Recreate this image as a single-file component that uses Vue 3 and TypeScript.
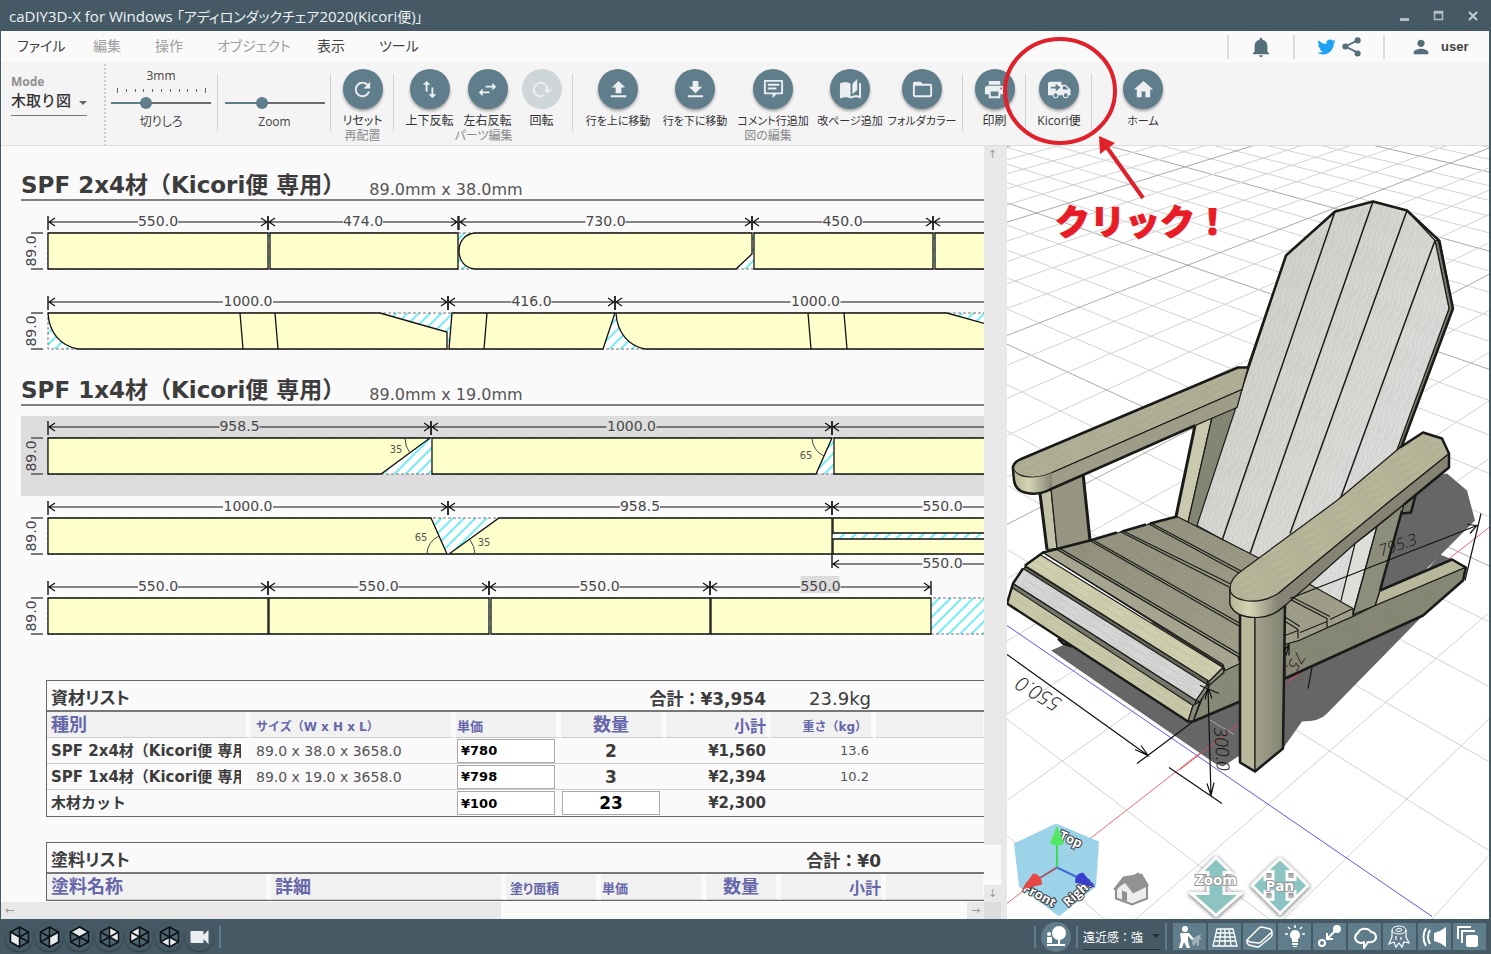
<script setup lang="ts">
import { ref } from 'vue'

interface Tool { label: string; icon: string; disabled?: boolean }
interface Group { cls: string; caption?: string; tools: Tool[] }
interface Dim { a: number; b: number; label: string; mark?: boolean; low?: boolean }
interface Angle { d: string; x: number; y: number; t: string }
interface BoardRow { selected?: boolean; end?: number; dims: Dim[]; faces: string[]; lines: string[]; angles: Angle[] }

const menus = [
  { label: 'ファイル', off: false },
  { label: '編集', off: true },
  { label: '操作', off: true },
  { label: 'オブジェクト', off: true },
  { label: '表示', off: false },
  { label: 'ツール', off: false },
]

const kerf = ref(3)
const zoom = ref(36)

const groups: Group[] = [
  { cls: 'g-reset', caption: '再配置', tools: [
    { label: 'リセット', icon: 'M17.65 6.35C16.2 4.9 14.21 4 12 4c-4.42 0-7.99 3.58-7.99 8s3.57 8 7.99 8c3.73 0 6.84-2.55 7.73-6h-2.08c-.82 2.33-3.04 4-5.65 4-3.31 0-6-2.69-6-6s2.69-6 6-6c1.66 0 3.14.69 4.22 1.78L13 11h7V4l-2.35 2.35z' },
  ] },
  { cls: 'g-parts', caption: 'パーツ編集', tools: [
    { label: '上下反転', icon: 'M16 17.01V10h-2v7.01h-3L15 21l4-3.99h-3zM9 3L5 6.99h3V14h2V6.99h3L9 3z' },
    { label: '左右反転', icon: 'M6.99 11L3 15l3.99 4v-3H14v-2H6.99v-3zM21 9l-3.99-4v3H10v2h7.01v3L21 9z' },
    { label: '回転', icon: 'M11 4a8 8 0 1 0 4.5 14.6l-1.2-1.7A6 6 0 1 1 17 12h-3l4.5 4.5L23 12h-4A8 8 0 0 0 11 4z', disabled: true },
  ] },
  { cls: 'g-draw', caption: '図の編集', tools: [
    { label: '行を上に移動', icon: 'M9 16h6v-6h4l-7-7-7 7h4v6zm-5 2h16v2H4v-2z' },
    { label: '行を下に移動', icon: 'M19 9h-4V3H9v6H5l7 7 7-7zM4 18v2h16v-2H4z' },
    { label: 'コメント行追加', icon: 'M3 2h18a1 1 0 0 1 1 1v13a1 1 0 0 1-1 1h-6l-4 4v-4H3a1 1 0 0 1-1-1V3a1 1 0 0 1 1-1zM4 4v11h16V4zM6 6h12v2H6zM6 10h9v2H6z' },
    { label: '改ページ追加', icon: 'M19 1l-5 5v11l5-4.5V1zM1 6v14.65c0 .25.25.5.5.5.1 0 .15-.05.25-.05C3.1 20.45 5.05 20 6.5 20c1.95 0 4.05.4 5.5 1.5V6c-1.45-1.1-3.55-1.5-5.5-1.5S2.45 4.9 1 6zm22 13.5V6c-.6-.45-1.25-.75-2-1v13.5c-1.1-.35-2.3-.5-3.5-.5-1.7 0-4.15.65-5.5 1.5v2c1.35-.85 3.8-1.5 5.5-1.5 1.65 0 3.35.3 4.75 1.05.1.05.15.05.25.05.25 0 .5-.25.5-.5v-1.1z' },
    { label: 'フォルダカラー', icon: 'M20 6h-8l-2-2H4c-1.1 0-1.99.9-1.99 2L2 18c0 1.1.9 2 2 2h16c1.1 0 2-.9 2-2V8c0-1.1-.9-2-2-2zm0 12H4V8h16v10z' },
  ] },
  { cls: 'g-print', tools: [
    { label: '印刷', icon: 'M19 8H5c-1.66 0-3 1.34-3 3v6h4v4h12v-4h4v-6c0-1.66-1.34-3-3-3zm-3 11H8v-5h8v5zm3-7c-.55 0-1-.45-1-1s.45-1 1-1 1 .45 1 1-.45 1-1 1zm-1-9H6v4h12V3z' },
  ] },
  { cls: 'g-kicori', tools: [
    { label: 'Kicori便', icon: 'M2 4h12v3h4.500l5 5v6h-2a3 3 0 0 1-6 0H11a3 3 0 0 1-6 0H0V6a2 2 0 0 1 2-2zM3 9v2h5v3l5-4-5-4v3zM15.500 8.500v3.500h6l-3.500-3.500zM8 16a2 2 0 1 0 0 4 2 2 0 1 0 0-4zM18.500 16a2 2 0 1 0 0 4 2 2 0 1 0 0-4z' },
  ] },
  { cls: 'g-home', tools: [
    { label: 'ホーム', icon: 'M10 20v-6h4v6h5v-8h3L12 3 2 12h3v8z' },
  ] },
]

const specs: { title: string; size: string; rows: BoardRow[] }[] = [
  {
    title: 'SPF 2x4材（Kicori便 専用）', size: '89.0mm x 38.0mm',
    rows: [
      {
        dims: [
          { a: 27, b: 247, label: '550.0' }, { a: 247, b: 437, label: '474.0' }, { a: 438, b: 731, label: '730.0' },
          { a: 731, b: 912, label: '450.0' }, { a: 912, b: 1192, label: '' },
        ],
        faces: [
          'M27 22H247V58H27Z', 'M249 22H437V58H249Z',
          'M454 22H731V43L715 58H454C444 57 438 50 438 40C438 30 444 23 454 22Z',
          'M733 22H912V58H733Z', 'M914 22H2400V58H914Z',
        ],
        lines: [], angles: [],
      },
      {
        dims: [{ a: 27, b: 427, label: '1000.0' }, { a: 427, b: 594, label: '416.0' }, { a: 594, b: 995, label: '1000.0' }],
        faces: [
          'M27 22H359L426 41V58H57C40 55 28 42 27 22Z', 'M431 22H594L582 58H428Z',
          'M595 22H926L994 41V58H624C608 55 596 42 595 22Z',
        ],
        lines: ['M219 22L222 58', 'M254 22L257 58', 'M466 22L463 58', 'M787 22L790 58', 'M823 22L826 58'], angles: [],
      },
    ],
  },
  {
    title: 'SPF 1x4材（Kicori便 専用）', size: '89.0mm x 19.0mm',
    rows: [
      {
        selected: true,
        dims: [{ a: 27, b: 410, label: '958.5' }, { a: 410, b: 811, label: '1000.0' }, { a: 811, b: 1211, label: '' }],
        faces: ['M27 22H409L360 58H27Z', 'M411 22H811L795 58H411Z', 'M813 22H2400V58H813Z'],
        lines: [],
        angles: [
          { d: 'M384 22A25 25 0 0 0 389 37', x: 375, y: 37, t: '35' },
          { d: 'M791 22A20 20 0 0 0 803 40', x: 785, y: 43, t: '65' },
        ],
      },
      {
        dims: [
          { a: 27, b: 427, label: '1000.0' }, { a: 427, b: 811, label: '958.5' }, { a: 811, b: 1032, label: '550.0' },
          { a: 811, b: 1032, label: '550.0', low: true },
        ],
        faces: ['M27 22H410L426 58H27Z', 'M478 22H811V58H428Z', 'M812 22H1032V37H812Z', 'M812 43H1032V58H812Z'],
        lines: [],
        angles: [
          { d: 'M406 58A20 20 0 0 1 418 40', x: 400, y: 45, t: '65' },
          { d: 'M454 58A25 25 0 0 0 449 44', x: 463, y: 50, t: '35' },
        ],
      },
      {
        dims: [
          { a: 27, b: 247, label: '550.0' }, { a: 247, b: 468, label: '550.0' }, { a: 468, b: 689, label: '550.0' },
          { a: 689, b: 910, label: '550.0', mark: true },
        ],
        faces: ['M27 22H247V58H27Z', 'M248 22H468V58H248Z', 'M470 22H689V58H470Z', 'M690 22H910V58H690Z'],
        lines: [], angles: [],
      },
    ],
  },
]

function half(d: Dim): number {
  return d.label.length === 6 ? 25 : d.label ? 20 : 0
}
function dimPath(d: Dim): string {
  const y = d.low ? 68 : 11
  const m = (d.a + d.b) / 2
  const h = half(d)
  return `M${d.a} ${y}H${m - h}M${m + h} ${y}H${d.b}M${d.a + 7} ${y - 4}L${d.a + 1} ${y}L${d.a + 7} ${y + 4}M${d.b - 7} ${y - 4}L${d.b - 1} ${y}L${d.b - 7} ${y + 4}`
}
function tickPath(d: Dim): string {
  return d.low ? `M${d.a} 58V72` : `M${d.a} 5V19M${d.b} 5V19`
}

const materials = [
  { name: 'SPF 2x4材（Kicori便 専用）', size: '89.0 x 38.0 x 3658.0', price: '¥780', qty: '2', sub: '¥1,560', kg: '13.6' },
  { name: 'SPF 1x4材（Kicori便 専用）', size: '89.0 x 19.0 x 3658.0', price: '¥798', qty: '3', sub: '¥2,394', kg: '10.2' },
  { name: '木材カット', size: '', price: '¥100', qty: '23', sub: '¥2,300', kg: '', edit: true },
]

// Ground grid: each family of lines meets in its own vanishing point.
interface GridLine { y1: number; y2: number; major: boolean }
const X1 = 1007
const X2 = 1489
const grid: GridLine[] = []
for (let n = -2; n <= 22; n++) {
  const s = 1.455 + 0.144 * n
  if (n !== 0) grid.push({ y1: (X1 + 230) / s - 225, y2: (X2 + 230) / s - 225, major: n % 5 === 0 })
}
for (let n = -3; n <= 24; n++) {
  const s = 1.282 + 0.129 * n
  if (n !== 0) grid.push({ y1: (2460 - X1) / s - 230, y2: (2460 - X2) / s - 230, major: n % 5 === 0 })
}

const cubeViews = [
  { name: '正面', face: '3,7 12,12 12,22 3,17', front: true },
  { name: '右', face: '21,7 12,12 12,22 21,17', front: true },
  { name: '上', face: '12,2 21,7 12,12 3,7', front: true },
  { name: '背面', face: '12,2 21,7 21,17 12,12', front: false },
  { name: '左', face: '12,2 3,7 3,17 12,12', front: false },
  { name: '下', face: '3,17 12,12 21,17 12,22', front: false },
]
</script>

<template>
  <div class="app">
    <header class="titlebar">
      <h1>caDIY3D-X for Windows <span>「アディロンダックチェア</span>2020(Kicori<span>便</span>)<span>」</span></h1>
      <div class="winbtns">
        <button aria-label="最小化"><svg viewBox="0 0 12 12"><path d="M1 8h9v3H1z" fill="#b4c0c6" /></svg></button>
        <button aria-label="最大化"><svg viewBox="0 0 12 12"><path d="M1.500 1.500h8v8h-8zM1.500 3h8" fill="none" stroke="#b4c0c6" stroke-width="1.500" /></svg></button>
        <button aria-label="閉じる"><svg viewBox="0 0 12 12"><path d="M2 2l8 8M10 2l-8 8" stroke="#c3cdd2" stroke-width="2" /></svg></button>
      </div>
    </header>

    <div class="menubar">
      <nav>
        <button v-for="m in menus" :key="m.label" :disabled="m.off">{{ m.label }}</button>
      </nav>
      <div class="account">
        <button class="cell bell" aria-label="お知らせ"><svg viewBox="0 0 24 24"><path d="M12 23c1.100 0 2-.9 2-2h-4c0 1.100.89 2 2 2zm7-6v-6c0-3.500-2-6-5.500-6.800V3.500C13.500 2.700 12.800 2 12 2s-1.500.7-1.500 1.500v.7C7 5 5 7.500 5 11v6l-2 2v1h18v-1z" /></svg></button>
        <div class="cell social">
          <button aria-label="Twitter"><svg viewBox="0 0 24 24" class="tw"><path d="M22.460 6c-.77.35-1.600.58-2.460.69.88-.53 1.560-1.370 1.880-2.380-.83.5-1.750.85-2.720 1.050C18.370 4.500 17.260 4 16 4c-2.350 0-4.270 1.920-4.270 4.290 0 .34.04.67.11.98C8.280 9.090 5.110 7.380 3 4.790c-.37.63-.58 1.370-.58 2.150 0 1.490.75 2.810 1.910 3.560-.71 0-1.370-.2-1.950-.5v.03c0 2.080 1.480 3.820 3.440 4.210a4.220 4.220 0 0 1-1.930.07 4.280 4.280 0 0 0 4 2.980 8.521 8.521 0 0 1-5.330 1.840c-.34 0-.68-.02-1.020-.06C3.440 20.290 5.700 21 8.120 21 16 21 20.330 14.460 20.330 8.790c0-.19 0-.37-.01-.56.84-.6 1.560-1.360 2.140-2.230z" /></svg></button>
          <button aria-label="共有"><svg viewBox="0 0 24 24"><path d="M19 5L5 12l14 7" fill="none" stroke="#546e7a" stroke-width="2" /><circle cx="19" cy="5" r="3.500" /><circle cx="5" cy="12" r="3.500" /><circle cx="19" cy="20" r="3.500" /></svg></button>
        </div>
        <button class="cell person"><svg viewBox="0 0 24 24"><path d="M12 12c2.210 0 4-1.790 4-4s-1.790-4-4-4-4 1.790-4 4 1.790 4 4 4zm0 2c-2.670 0-8 1.340-8 4v2h16v-2c0-2.660-5.330-4-8-4z" /></svg><span>user</span></button>
      </div>
    </div>

    <div class="toolbar">
      <div class="mode">
        <label for="mode">Mode</label>
        <div class="pick">
          <select id="mode"><option>木取り図</option></select>
          <svg viewBox="0 0 8 4"><path d="M0 0h8L4 4z" fill="#666" /></svg>
        </div>
      </div>
      <div class="slide kerf">
        <output for="kerf">{{ kerf }}mm</output>
        <svg class="ticks" viewBox="0 0 100 5"><path d="M6.500 0v5M15.500 1v3M24.500 1v3M32.500 1v3M41.500 1v3M50.500 1v3M59.500 1v3M68.500 1v3M76.500 1v3M85.500 1v3M94.500 0v5" stroke="#666" /></svg>
        <input id="kerf" v-model.number="kerf" type="range" min="0" max="9">
        <label for="kerf">切りしろ</label>
      </div>
      <div class="slide zoom">
        <input id="zoom" v-model.number="zoom" type="range" min="0" max="100">
        <label for="zoom">Zoom</label>
      </div>
      <section v-for="g in groups" :key="g.cls" class="group" :class="g.cls">
        <div class="tools">
          <button v-for="t in g.tools" :key="t.label" class="tool" :disabled="t.disabled">
            <span class="disc"><svg viewBox="0 0 24 24"><path :d="t.icon" fill-rule="evenodd" /></svg></span>
            <span class="name">{{ t.label }}</span>
          </button>
        </div>
        <p v-if="g.caption">{{ g.caption }}</p>
      </section>
    </div>

    <main>
      <div class="left">
        <div class="doc">
          <svg class="defs" width="0" height="0" aria-hidden="true">
            <defs>
              <pattern id="hatch" width="8" height="8" patternUnits="userSpaceOnUse" patternTransform="rotate(45)">
                <rect width="8" height="8" fill="#fff" /><path d="M1 0V8" stroke="#74ecf4" stroke-width="2" />
              </pattern>
            </defs>
          </svg>
          <section v-for="s in specs" :key="s.title">
            <div class="head"><h2>{{ s.title }}</h2><span>{{ s.size }}</span></div>
            <svg v-for="(r, i) in s.rows" :key="i" class="board" :class="{ selected: r.selected }">
              <rect x="27" y="22" width="2400" height="36" fill="url(#hatch)" stroke="#777" stroke-dasharray="3 2" />
              <path v-for="f in r.faces" :key="f" :d="f" fill="#ffffcc" stroke="#111" stroke-width="1.300" />
              <path v-for="l in r.lines" :key="l" :d="l" stroke="#111" stroke-width="1.300" />
              <path d="M10 22H22M10 58H22" stroke="#777" stroke-width="2" />
              <text class="num" transform="translate(15 40) rotate(-90)" text-anchor="middle">89.0</text>
              <g v-for="(d, k) in r.dims" :key="k">
                <path :d="dimPath(d)" fill="none" stroke="#111" stroke-width="1.200" />
                <path :d="tickPath(d)" stroke="#222" stroke-width="1.500" />
                <rect v-if="d.mark" :x="(d.a + d.b) / 2 - 20" y="0" width="39" height="17" fill="#ddd" />
                <text class="num" :x="(d.a + d.b) / 2" :y="d.low ? 72 : 15" text-anchor="middle">{{ d.label }}</text>
              </g>
              <g v-for="a in r.angles" :key="a.d">
                <path :d="a.d" fill="none" stroke="#444" />
                <text class="ang" :x="a.x" :y="a.y" text-anchor="middle">{{ a.t }}</text>
              </g>
            </svg>
          </section>

          <table class="list one">
            <colgroup><col class="w204"><col class="w205"><col class="w105"><col class="w105"><col class="w105"><col class="w105"><col></colgroup>
            <thead>
              <tr class="top"><th colspan="2" class="ttl">資材リスト</th><th colspan="3" class="sum">合計：¥3,954</th><th class="kgs">23.9kg</th><th /></tr>
              <tr class="cols"><th class="big">種別</th><th class="full">サイズ（W x H x L）</th><th class="tight">単価</th><th class="big mid">数量</th><th class="med rt">小計</th><th class="full rt wt">重さ（kg）</th><th /></tr>
            </thead>
            <tbody>
              <tr v-for="m in materials" :key="m.name">
                <td class="nm"><div>{{ m.name }}</div></td>
                <td class="sz">{{ m.size }}</td>
                <td class="box"><input :value="m.price" :aria-label="m.name + ' 単価'"></td>
                <td v-if="m.edit" class="box"><input class="qty" :value="m.qty" :aria-label="m.name + ' 数量'"></td>
                <td v-else class="qt">{{ m.qty }}</td>
                <td class="sb">{{ m.sub }}</td>
                <td class="kg">{{ m.kg }}</td>
                <td />
              </tr>
            </tbody>
          </table>

          <table class="list two">
            <colgroup><col class="w224"><col class="w235"><col class="w95"><col class="w105"><col class="w75"><col class="w105"><col></colgroup>
            <thead>
              <tr class="top"><th colspan="3" class="ttl">塗料リスト</th><th colspan="3" class="sum">合計：¥0</th><th /></tr>
              <tr class="cols"><th class="big">塗料名称</th><th class="big">詳細</th><th>塗り面積</th><th class="tight">単価</th><th class="big mid">数量</th><th class="med rt">小計</th><th /></tr>
            </thead>
          </table>
        </div>
        <div class="vbar"><button aria-label="上へ">↑</button><span class="track" /><span class="thumb" /><button aria-label="下へ">↓</button></div>
        <div class="hbar"><button aria-label="左へ">←</button><span class="track" /><span class="thumb" /><button aria-label="右へ">→</button></div>
        <span class="corner" />
        <span class="split" />
      </div>

      <svg class="scene" viewBox="1007 145 482 774" preserveAspectRatio="xMidYMid slice" role="img" aria-label="アディロンダックチェア">
        <defs>
          <pattern id="grainA" width="9" height="40" patternUnits="userSpaceOnUse" patternTransform="rotate(20)">
            <path d="M1.500 0V25M4 8V40M6.500 0V15M8 18V38" stroke="#77776c" stroke-width=".6" opacity=".22" />
          </pattern>
          <pattern id="grainB" width="40" height="7" patternUnits="userSpaceOnUse" patternTransform="rotate(29)">
            <path d="M0 1.500H25M8 3.500H40M0 5.500H18" stroke="#55554a" stroke-width=".6" opacity=".18" />
          </pattern>
          <pattern id="grainC" width="40" height="7" patternUnits="userSpaceOnUse" patternTransform="rotate(-32)">
            <path d="M0 1.500H25M8 3.500H40M0 5.500H18" stroke="#66664e" stroke-width=".6" opacity=".18" />
          </pattern>
          <linearGradient id="back" x1="0" y1="0" x2="1" y2="1"><stop offset="0" stop-color="#cdcdc4" /><stop offset="1" stop-color="#e2e2e4" /></linearGradient>
          <linearGradient id="cap" x1="0" y1="0" x2="1" y2="0"><stop offset="0" stop-color="#b5b596" /><stop offset=".4" stop-color="#d6d6b5" /><stop offset="1" stop-color="#858474" /></linearGradient>
          <linearGradient id="leg" x1="0" y1="0" x2="1" y2="0"><stop offset="0" stop-color="#a2a28c" /><stop offset="1" stop-color="#828272" /></linearGradient>
          <linearGradient id="seat" x1="0" y1="0" x2="1" y2=".6"><stop offset="0" stop-color="#8f8f7d" /><stop offset="1" stop-color="#a0a08a" /></linearGradient>
        </defs>
        <rect x="1007" y="145" width="482" height="774" fill="#fff" />
        <g fill="none">
          <line v-for="(l, i) in grid" :key="i" :x1="X1" :y1="l.y1" :x2="X2" :y2="l.y2" :stroke="l.major ? '#a9a9a9' : '#d2d2d2'" />
        </g>
        <path d="M1007 903L1489 527" stroke="#f26a70" />
        <path d="M1007 625L1432 916" stroke="#5a5af0" />

        <g fill="#666">
          <path d="M1415 478L1447 473L1467 490L1475 520L1423 572L1385 600L1300 600L1350 520Z" />
          <path d="M1420 578L1440 554L1455 560L1440 572Z" />
          <path d="M1051 650L1067 643L1240 600L1380 600L1430 608L1423 615L1327 713Q1320 721 1302 721L1283 748L1238 756L1223 766L1215 763Z" />
        </g>
        <path d="M1285 684L1302 671M1180 769L1238 724" stroke="#d94c52" />
        <path d="M1209 719L1234 734" stroke="#aaa" />

        <g stroke="#1a1a18" stroke-width="1.200" stroke-linejoin="round">
          <!-- left rear upright -->
          <path d="M1195 425L1212 417L1188 522L1176 516Z" fill="#c9c9af" />
          <path d="M1212 417L1240 403L1197 527L1188 522Z" fill="#858574" />
          <!-- left front leg -->
          <path d="M1040 493L1051 488L1057 548L1047 549Z" fill="#c2c2a8" />
          <path d="M1051 488L1083 473L1090 540L1057 548Z" fill="#959581" />
          <path d="M1083 473L1090 540M1040 493L1047 549M1195 425L1176 516" fill="none" stroke-width="3" />
          <!-- backrest -->
          <path d="M1435 240L1440 240L1453 308L1402 445L1394 454L1449 308Z" fill="#7b7b70" />
          <path d="M1286 255L1335 211L1373 201L1407 210L1435 240L1449 308L1340 604L1197 525Z" fill="url(#back)" />
          <path d="M1286 255L1335 211L1373 201L1407 210L1435 240L1449 308L1340 604L1197 525Z" fill="url(#grainA)" stroke="none" />
          <path d="M1335 211L1222 540M1373 201L1250 553M1407 210L1290 533M1435 240L1325 540" fill="none" stroke-width="1.500" />
          <path d="M1355 543L1377 526L1353 613L1340 604Z" fill="#deded8" />
          <path d="M1248 367L1286 255L1335 211L1373 201L1407 210L1439 240L1453 308L1402 445" fill="none" stroke-width="2.500" />
          <!-- left armrest -->
          <path d="M1013 467Q1013 461 1020 459L1238 367L1248 367L1242 389L1050 473Q1033 480 1019 474Q1013 471 1013 467Z" fill="#b1b096" />
          <path d="M1013 467Q1013 461 1020 459L1238 367L1248 367L1242 389L1050 473Q1033 480 1019 474Z" fill="url(#grainC)" stroke="none" />
          <path d="M1013 467Q1016 478 1033 477Q1045 476 1050 473L1242 389L1237 407L1195 425L1050 489Q1037 495 1023 491Q1014 488 1014 480Z" fill="#9d9d88" />
          <path d="M1013 467Q1016 478 1033 477Q1045 476 1052 472V489Q1037 495 1023 491Q1014 488 1014 480Z" fill="url(#cap)" stroke="none" />
          <path d="M1248 367H1238L1020 459Q1012 463 1013 469L1014 480Q1016 492 1030 493Q1041 494 1050 489L1195 425" fill="none" stroke-width="2.500" />
          <!-- seat -->
          <path d="M1043 552L1090 540L1177 516L1250 553L1310 584L1353 608V616L1328 627L1300 640L1285 644L1225 667Z" fill="url(#seat)" />
          <path d="M1043 552L1090 540L1177 516L1250 553L1310 584L1353 608V616L1328 627L1300 640L1285 644L1225 667Z" fill="url(#grainB)" stroke="none" />
          <path d="M1057 549L1238 656M1060 548L1240 654M1090 540L1240 626M1092 539L1242 624M1120 531L1240 592L1298 629V638M1122 530L1242 589L1300 626M1148 523L1240 573L1327 618V627M1150 522L1242 571L1330 616M1285 635L1298 630M1300 632L1327 621M1330 619L1353 608" fill="none" />
          <!-- side rail -->
          <path d="M1240 655L1223 671L1207 686L1193 721L1240 701Z" fill="#898977" />
          <path d="M1285 644L1299 640L1328 627L1353 616L1375 605L1465 567L1463 580L1423 615L1285 678Z" fill="#878776" />
          <path d="M1285 644L1299 640L1353 616L1465 567L1463 580L1423 615L1285 678Z" fill="url(#grainC)" stroke="none" />
          <path d="M1380 590L1452 559L1465 567L1375 605Z" fill="#b7b79b" />
          <path d="M1380 590L1452 559L1466 567L1463 580L1423 615L1285 678M1193 721L1240 701" fill="none" stroke-width="2.500" />
          <!-- right rear leg -->
          <path d="M1402 496L1416 492L1411 512L1402 513Z" fill="#77776a" />
          <path d="M1377 526L1404 504L1380 590L1375 605L1353 614Z" fill="#8d8d7c" />
          <path d="M1402 510L1380 590M1402 513L1411 512L1416 493" fill="none" stroke-width="2.500" />
          <!-- front slats -->
          <path d="M1043 552L1057 549L1238 656L1240 663L1225 670L1223 664Z" fill="#a5a58f" />
          <path d="M1040 554L1025 565L1209 681L1223 667Z" fill="#d0d0b0" />
          <path d="M1209 681L1223 667L1224 672L1209 685Z" fill="#8b8b7a" />
          <path d="M1025 566L1208 680L1206 686L1023 571Z" fill="#66665c" />
          <path d="M1023 568L1013 583L1196 700L1207 684Z" fill="#d6d6d6" />
          <path d="M1013 583L1196 700L1194 706L1012 589Z" fill="#77776b" />
          <path d="M1012 587L1007 603L1188 721L1193 705Z" fill="#c9c9aa" />
          <path d="M1193 705L1200 701L1193 721L1188 721Z" fill="#8b8b7a" />
          <path d="M1196 700L1207 684L1209 687L1200 701Z" fill="#8b8b7a" />
          <path d="M1007 603L1188 721L1240 701L1225 667L1040 554Z" fill="url(#grainB)" stroke="none" />
          <path d="M1177 516L1150 523M1146 524L1122 531M1117 532L1090 540L1043 552L1025 565M1023 568L1013 583L1007 603L1188 721L1193 721M1058 638L1063 643L1072 646" fill="none" stroke-width="2.500" />
          <!-- right front leg -->
          <path d="M1240 612L1255 615V771L1240 762Z" fill="#bab99c" />
          <path d="M1255 615L1285 600L1283 748L1255 771Z" fill="url(#leg)" />
          <path d="M1240 612V762L1255 771L1283 748L1285 603" fill="none" stroke-width="2.500" />
          <!-- right armrest -->
          <path d="M1230 588V604Q1235 617 1257 617Q1272 617 1285 605L1308 585L1355 543L1405 503L1449 467V453L1388 502L1278 593Q1262 603 1245 600Z" fill="#858474" />
          <path d="M1230 588V604Q1235 617 1257 617Q1270 617 1278 611V593Q1262 603 1245 600Z" fill="url(#cap)" stroke="none" />
          <path d="M1230 588Q1230 578 1242 570L1337 500L1400 447L1423 432L1442 438L1449 453L1388 502L1278 593Q1262 603 1245 600Q1230 597 1230 588Z" fill="#b8b699" />
          <path d="M1230 588Q1230 578 1242 570L1337 500L1400 447L1423 432L1442 438L1449 453L1388 502L1278 593Q1262 603 1245 600Q1230 597 1230 588Z" fill="url(#grainC)" stroke="none" />
          <path d="M1230 588V604Q1235 617 1257 617Q1272 617 1285 605" fill="none" />
          <path d="M1400 447L1423 432L1442 438L1449 453V467L1404 504" fill="none" stroke-width="2.500" />
        </g>

        <!-- dimensions in space -->
        <g stroke="#111" stroke-width="1.200" fill="none">
          <path d="M1290 598L1477 525M1467 524L1477 525L1470 533M1481 513L1465 580" />
          <path d="M1007 654L1148 755M1137 763L1192 722M1141 745L1148 755L1135 749" />
          <path d="M1208 687L1211 795M1205 699L1208 687L1212 698M1207 783L1211 795L1214 782M1169 767L1222 803M1200 685L1219 693" />
          <path d="M1312 667L1308 688M1289 644L1286 655M1284 650L1289 644V655" />
        </g>
        <g class="dim3">
          <text class="small" transform="translate(1381 556) rotate(-19)">795.3</text>
          <text transform="translate(1063 700) rotate(211)">550.0</text>
          <text class="mid" transform="translate(1214 727) rotate(86)">300.0</text>
          <text class="small" transform="translate(1297 650) rotate(125)">75.</text>
        </g>

        <!-- view cube -->
        <path d="M1056 823L1099 841L1096 886L1059 916L1019 886L1014 843Z" fill="#8fcde6" opacity=".88" />
        <g class="cubetxt">
          <text transform="translate(1058 838) rotate(24)">Top</text>
          <text transform="translate(1022 890) rotate(29)">Front</text>
          <text transform="translate(1068 907) rotate(-42)">Right</text>
        </g>
        <path d="M1057 867V842" stroke="#3ddc55" stroke-width="2" />
        <path d="M1057 867L1036 880" stroke="#a05a6a" stroke-width="2" />
        <path d="M1057 867L1080 878" stroke="#3f6fd8" stroke-width="2" />
        <path d="M1057 825L1050 843Q1057 847 1064 843Z" fill="#4fe860" />
        <path d="M1022 889L1033 873Q1042 874 1042 884Z" fill="#e84545" />
        <path d="M1095 887L1075 882Q1075 873 1083 872Z" fill="#3c3ccf" />

        <!-- home -->
        <path d="M1118 886L1138 873L1147 886V898L1132 904L1116 898V889Z" fill="#ededed" stroke="#8f8f8f" stroke-width="2" />
        <path d="M1113 889L1123 876L1142 873L1149 885L1133 893L1124 881L1116 890Z" fill="#929292" />
        <path d="M1122 890L1127 892V901L1122 899Z" fill="#8f8f8f" />

        <!-- zoom and pan handles -->
        <g class="handle">
          <path d="M1216 857L1231 872H1224V893H1241L1216 915L1191 893H1208V872H1201Z" />
          <path d="M1280 858L1294 871H1287V879H1295V872L1308 885L1295 898V891H1287V899H1294L1280 913L1266 899H1273V891H1265V898L1252 885L1265 872V879H1273V871H1266Z" />
        </g>
        <g class="handletxt">
          <text x="1216" y="884" text-anchor="middle">Zoom</text>
          <text x="1280" y="890" text-anchor="middle">Pan</text>
        </g>
      </svg>
    </main>

    <footer>
      <div class="views">
        <button v-for="c in cubeViews" :key="c.name" :aria-label="c.name">
          <svg viewBox="0 0 24 24">
            <polygon points="12,2 21,7 21,17 12,22 3,17 3,7" fill="#4d6570" />
            <polygon v-if="!c.front" :points="c.face" fill="#e8ecef" />
            <path d="M12 2L21 7V17L12 22L3 17V7ZM12 2V22M3 7L21 17M21 7L3 17" fill="none" stroke="#0d1417" stroke-width="1.500" />
            <polygon v-if="c.front" :points="c.face" fill="#e8ecef" stroke="#0d1417" stroke-width="1.500" />
          </svg>
        </button>
        <button aria-label="カメラ"><svg viewBox="0 0 24 24"><path d="M4 6h11a1 1 0 0 1 1 1v3l5-5v14l-5-5v3a1 1 0 0 1-1 1H4a1 1 0 0 1-1-1V7a1 1 0 0 1 1-1z" fill="#eceff1" /></svg></button>
      </div>
      <div class="status">
        <button class="scenery" aria-label="背景"><svg viewBox="0 0 30 30"><circle cx="15" cy="15" r="15" fill="#607d8b" /><circle cx="18" cy="11" r="7" fill="#fff" /><path d="M17 16h2v6h5v2H6v-2h11z" fill="#fff" /><circle cx="8" cy="12" r="2" fill="#fff" /><path d="M6 15h5v6H6z" fill="#fff" /></svg></button>
        <div class="persp">
          <select aria-label="遠近感"><option>遠近感：強</option></select>
          <svg viewBox="0 0 8 4"><path d="M0 0h8L4 4z" fill="#263238" /></svg>
        </div>
        <div class="toggles">
          <button aria-label="人物"><svg viewBox="0 0 32 26"><circle cx="11" cy="5" r="3" fill="#fff" /><path d="M7 9h8l5 6-2 1-4-4v5l2 7h-3l-3-6-2 6H5l2-8-1-6z" fill="#fff" /><path d="M18 20q0-6 5-8l4-2-1 3 2 2-3 1v6h-2v-4l-3 4z" fill="#9fb1ba" /></svg></button>
          <button aria-label="グリッド"><svg viewBox="0 0 32 26"><path d="M8 5h16l4 17H4zM7 9h18M6 13h20M5 17h22M12 5l-2 17M16 5v17M20 5l2 17" fill="none" stroke="#fff" stroke-width="1.300" /></svg></button>
          <button aria-label="板"><svg viewBox="0 0 32 26"><path d="M3 16L15 4q1-1 3-1l8 2q2 1 2 3v3q0 1-1 2L16 22q-1 1-3 1l-8-2q-2-1-2-3zM3 16q1 1 3 2l8 1q2 0 3-1L28 8" fill="none" stroke="#fff" stroke-width="1.500" stroke-linejoin="round" /></svg></button>
          <button aria-label="照明"><svg viewBox="0 0 32 26"><path d="M16 6a5 5 0 0 1 3 9v3h-6v-3a5 5 0 0 1 3-9zM13 19h6v2h-6zM14 22h4v1h-4z" fill="#fff" /><path d="M16 1v3M9 3l2 2M23 3l-2 2M6 10h3M23 10h3" stroke="#fff" stroke-width="1.500" /></svg></button>
          <button aria-label="寸法"><svg viewBox="0 0 32 26"><circle cx="8" cy="19" r="3" fill="none" stroke="#fff" stroke-width="2" /><circle cx="23" cy="5" r="4" fill="#fff" /><path d="M22 6l-8 8M13 9v6h6" fill="none" stroke="#fff" stroke-width="2" /></svg></button>
          <button aria-label="コメント"><svg viewBox="0 0 32 26"><path d="M9 18a5 5 0 0 1 0-9 7 6 0 0 1 13-1 5 5 0 0 1 3 9q-3 2-6 1l-4 6v-6q-3 2-6 0z" fill="none" stroke="#fff" stroke-width="2" stroke-linejoin="round" /></svg></button>
          <button aria-label="木目"><svg viewBox="0 0 32 26"><ellipse cx="15" cy="6" rx="7" ry="4" fill="none" stroke="#fff" /><ellipse cx="15" cy="6" rx="3" ry="1.500" fill="none" stroke="#fff" /><path d="M8 6v7l-3 7 5-2 2 5 3-4 3 4 2-5 5 1-3-6V6M12 12v4M17 13v3" fill="none" stroke="#fff" stroke-width="1.200" /></svg></button>
          <button aria-label="音"><svg viewBox="0 0 32 26"><path d="M15 9l6-2 6-4v20l-6-4-6-2z" fill="#fff" /><path d="M11 6q-4 7 0 14M7 4q-5 9 0 18" fill="none" stroke="#fff" stroke-width="2" /></svg></button>
          <button aria-label="重なり"><svg viewBox="0 0 32 26"><rect x="12" y="11" width="12" height="12" rx="2" fill="#fff" /><path d="M8 19V7h13M4 15V3h13" fill="none" stroke="#fff" stroke-width="2" /></svg></button>
        </div>
      </div>
    </footer>

    <svg class="callout" width="260" height="240">
      <ellipse cx="60" cy="61" rx="55" ry="52" fill="none" stroke="#e0202a" stroke-width="4" />
      <path d="M143 168L106 116" stroke="#e0202a" stroke-width="4" />
      <path d="M99 106L115 113L100 124Z" fill="#e0202a" />
      <text x="55" y="205">クリック！</text>
    </svg>
  </div>
</template>

<style>
html, body { margin: 0; overflow: hidden; }
</style>

<style scoped>
.app {
  position: relative; box-sizing: border-box; height: 100vh; display: flex; flex-direction: column;
  border: solid #455a64; border-width: 0 2px 0 1px; background: #fafafa; color: #424242;
  font-family: "Open Sans", "Noto Sans CJK JP", sans-serif;
}
button { font: inherit; color: inherit; border: 0; padding: 0; margin: 0; background: none; }
svg { display: block; }
h1, h2, p { margin: 0; }

.titlebar { flex: none; height: 31px; background: #455a64; display: flex; justify-content: space-between; align-items: center; padding: 0 8px; }
h1 { font-size: 15px; font-weight: 400; color: #eef2f4; font-feature-settings: "palt"; white-space: nowrap; }
h1 span { font-size: 14px; }
.winbtns { display: flex; gap: 22px; padding-right: 2px; }
.winbtns svg { width: 12px; height: 12px; }

.menubar { flex: none; height: 31px; display: flex; justify-content: space-between; }
nav { display: grid; grid-template-columns: 76px 62px 62px 100px 62px 62px; padding: 0 0 4px 16px; align-items: center; }
nav button { font-size: 14px; text-align: left; font-feature-settings: "palt"; white-space: nowrap; }
nav button:disabled { color: #9e9e9e; }
.account { display: flex; align-items: center; }
.cell { box-sizing: border-box; height: 24px; border-left: 2px solid #ddd; display: flex; align-items: center; justify-content: center; }
.cell svg { width: 22px; height: 22px; fill: #546e7a; }
.bell { width: 66px; }
.social { width: 90px; gap: 4px; }
.social svg { width: 21px; height: 21px; }
.social .tw { fill: #1da1f2; }
.person { width: 106px; gap: 9px; justify-content: flex-start; padding-left: 25px; font: bold 13px "Liberation Sans", sans-serif; }

.toolbar { flex: none; height: 83px; background: #f4f4f4; border-bottom: 1px solid #ddd; display: flex; }
.mode { width: 92px; padding: 12px 0 0 10px; }
.mode, .slide, .group { box-sizing: border-box; }
.mode label { display: block; font-size: 12px; line-height: 16px; font-weight: 700; color: #8f8f8f; }
.pick { width: 76px; display: flex; align-items: center; border-bottom: 1px solid #777; height: 25px; }
.pick select { appearance: none; flex: 1; min-width: 0; border: 0; padding: 0; background: none; font: 500 15px "Noto Sans CJK JP", sans-serif; color: #333; height: 24px; margin-bottom: 6px; }
.pick svg { width: 8px; height: 4px; }
.slide { position: relative; width: 107px; display: flex; flex-direction: column; align-items: center; font-size: 12px; line-height: 14px; color: #444; }
.kerf { margin-left: 11px; padding-top: 7px; width: 114px; background: radial-gradient(circle at 1px 2px, #ccc 1px, transparent 1px) 0 5px / 3px 4px repeat-y; }
.zoom { width: 113px; padding-top: 35px; }
.ticks { width: 100px; height: 5px; margin: 5px 0 4px; }
.slide input { appearance: none; width: 100px; height: 12px; margin: 0; background: linear-gradient(#607d8b, #607d8b) 0 5px / 34px 2px no-repeat, linear-gradient(#6f6a6c, #6f6a6c) 0 5px / 100% 2px no-repeat; }
.slide input::-webkit-slider-thumb { appearance: none; width: 12px; height: 12px; border-radius: 50%; background: #607d8b; }
.slide label { margin-top: 6px; font-feature-settings: "palt"; }
.kerf::after, .zoom::after, .group::after { content: ""; position: absolute; right: 0; top: 12px; height: 57px; border-right: 1px solid #d0d0d0; }

.group { position: relative; padding-top: 7px; }
.g-home::after { display: none; }
.tools { display: grid; justify-content: center; }
.g-reset { width: 63px; }
.g-parts { width: 179px; } .g-parts .tools { grid-template-columns: 58px 58px 50px; }
.g-draw { width: 390px; } .g-draw .tools { grid-template-columns: 76px 78px 78px 76px 68px; }
.g-print { width: 63px; }
.g-kicori { width: 66px; }
.g-home { width: 102px; }
.tool { display: flex; flex-direction: column; align-items: center; }
.disc { width: 40px; height: 40px; border-radius: 50%; background: #607d8b; display: flex; align-items: center; justify-content: center; box-shadow: 0 2px 3px rgba(0, 0, 0, .35); }
.disc svg { width: 23px; height: 23px; fill: #eceff1; }
.tool:disabled .disc { background: #cfd6da; box-shadow: none; }
.name { margin-top: 4px; font-size: 12px; line-height: 16px; color: #333; white-space: nowrap; font-feature-settings: "palt"; }
.g-draw .name, .g-home .name { font-size: 11px; }
.group p { text-align: center; font-size: 12px; line-height: 14px; color: #8a8a8a; font-feature-settings: "palt"; }

main { flex: 1; min-height: 0; display: flex; }
.left { flex: 1006 1 0; min-width: 0; display: grid; grid-template-columns: minmax(0, 1fr) 17px 6px; grid-template-rows: minmax(0, 1fr) 17px; }
.doc { overflow: hidden; padding: 20px 0 0 20px; font-family: "DejaVu Sans", "Noto Sans CJK JP", sans-serif; }
.defs { position: absolute; }
.head { box-sizing: border-box; height: 35px; border-bottom: 2px solid #808080; margin-bottom: 10px; display: flex; align-items: flex-start; gap: 24px; white-space: nowrap; }
h2 { font-size: 23px; line-height: 39px; color: #3c3c3c; }
.head span { font-size: 16px; line-height: 48px; color: #555; }
.board { width: 100%; height: 80px; overflow: hidden; }
.board.selected { background: #ddd; }
.num { font-size: 14px; fill: #484848; }
.ang { font-size: 10px; fill: #555; }

.list { margin: 24px 0 0 25px; width: calc(100% - 20px); table-layout: fixed; border-collapse: separate; border-spacing: 0; border: 1px solid #666; color: #3c3c3c; }
.two { margin-top: 25px; }
.w204 { width: 204px; } .w205 { width: 205px; } .w105 { width: 105px; } .w224 { width: 224px; } .w235 { width: 235px; } .w95 { width: 95px; } .w75 { width: 75px; }
.list th, .list td { box-sizing: border-box; padding: 0 5px 0 4px; white-space: nowrap; line-height: 22px; text-align: left; }
.list .top th { height: 31px; border-bottom: 2px solid #777; padding-top: 4px; }
.list .ttl { font-size: 17px; font-feature-settings: "palt"; }
.list .sum { font-size: 17px; text-align: right; vertical-align: bottom; }
.list .kgs { font-size: 18px; font-weight: 400; text-align: right; vertical-align: bottom; }
.cols th { height: 26px; font-size: 13px; line-height: 20px; color: #6666aa; border-bottom: 1px solid #ccc; border-right: 5px solid #fafafa; background: #f1f1f1; background-clip: padding-box; vertical-align: bottom; font-feature-settings: "palt"; padding-right: 0; }
.list .cols .full { font-size: 12px; font-feature-settings: normal; padding-left: 5px; }
.list .cols .wt { padding-right: 4px; }
.list .cols .big { font-size: 18px; line-height: 24px; }
.list .cols .med { font-size: 16px; }
.list .cols .mid { text-align: center; padding-left: 0; }
.list .cols .rt { text-align: right; }
.list .cols .tight { padding-left: 1px; }
.list td { height: 26px; border-bottom: 1px solid #ccc; }
.list tr:last-child td { border-bottom: 0; }
.nm div { overflow: hidden; width: 190px; }
.list .nm { font-size: 15px; font-weight: 700; }
.list .sz { font-size: 14px; padding-left: 5px; color: #555; }
.list .box { padding: 0 0 0 1px; line-height: 0; }
.box input { box-sizing: border-box; width: 98px; height: 24px; margin: 0; border: 1px solid #aaa; padding: 0 3px; background: #fff; font: bold 13px "DejaVu Sans", sans-serif; color: #000; }
.box input.qty { text-align: center; font-size: 17px; }
.list .qt { text-align: center; font-size: 17px; font-weight: 700; padding: 0 5px 0 0; }
.list .sb { text-align: right; font-size: 15px; font-weight: 700; }
.list .kg { text-align: right; font-size: 13px; color: #555; padding-right: 7px; }

.vbar { background: #fafafa; display: flex; flex-direction: column; }
.hbar { background: #fafafa; display: flex; }
.vbar button, .hbar button { flex: none; width: 17px; height: 17px; background: #e8e8e8; color: #999; font: 11px/17px "DejaVu Sans", sans-serif; }
.vbar .track { flex: 683 1 0; background: #e8e8e8; }
.vbar .thumb { flex: 40 1 0; }
.hbar .track { flex: 483 1 0; background: #e8e8e8; }
.hbar .thumb { flex: 466 1 0; }
.split { grid-column: 3; grid-row: 1 / 3; background: #e8e8e8; }
.hbar { grid-row: 2; }
.corner { grid-row: 2; background: #dcdcdc; }

.scene { flex: 482 1 0; min-width: 0; height: 100%; }
.dim3 { font: italic 300 20px "Open Sans", sans-serif; fill: #111; }
.dim3 .mid { font-size: 18px; }
.dim3 .small { font-size: 16px; }
.cubetxt { font: bold 13px "Open Sans", sans-serif; fill: #fff; stroke: #3a3a3a; stroke-width: 2px; paint-order: stroke; }
.handle { fill: #8cc4c2; stroke: #fafafa; stroke-width: 3px; filter: drop-shadow(0 1px 2px rgba(0, 0, 0, .6)); }
.handletxt { font: bold 15px "Open Sans", sans-serif; fill: #fff; stroke: #999; stroke-width: 2px; paint-order: stroke; }

footer { flex: none; height: 35px; background: #455a64; display: flex; justify-content: space-between; }
.views { display: flex; align-items: center; gap: 2px; padding-left: 4px; }
.views button { width: 28px; height: 28px; border-radius: 50%; display: flex; align-items: center; justify-content: center; box-shadow: 0 1px 2px rgba(0, 0, 0, .35); }
.views svg { width: 25px; height: 24px; }
.views::after { content: ""; height: 22px; border-right: 2px solid #607d8b; margin-left: 4px; }
.status { display: flex; align-items: center; padding-right: 3px; }
.scenery { border-left: 2px solid #607d8b; border-right: 2px solid #607d8b; height: 22px; width: 44px; display: flex; align-items: center; justify-content: center; }
.scenery svg { width: 30px; height: 30px; flex: none; }
.persp { margin: 0 5px; width: 77px; height: 26px; border-bottom: 1px solid #263238; display: flex; align-items: center; }
.persp select { appearance: none; flex: 1; min-width: 0; border: 0; padding: 0; background: none; color: #fff; font: 12px "Noto Sans CJK JP", sans-serif; }
.persp svg { width: 8px; height: 4px; }
.toggles { display: flex; gap: 2px; border-left: 2px solid #607d8b; padding-left: 6px; }
.toggles button { width: 33px; height: 27px; background: #607d8b; display: flex; align-items: center; justify-content: center; }
.toggles svg { width: 32px; height: 26px; }

.callout { position: absolute; left: 999px; top: 30px; pointer-events: none; }
.callout text { font: 900 35px "Noto Sans CJK JP", sans-serif; fill: #e81c26; stroke: #e81c26; stroke-width: 1px; }
</style>
